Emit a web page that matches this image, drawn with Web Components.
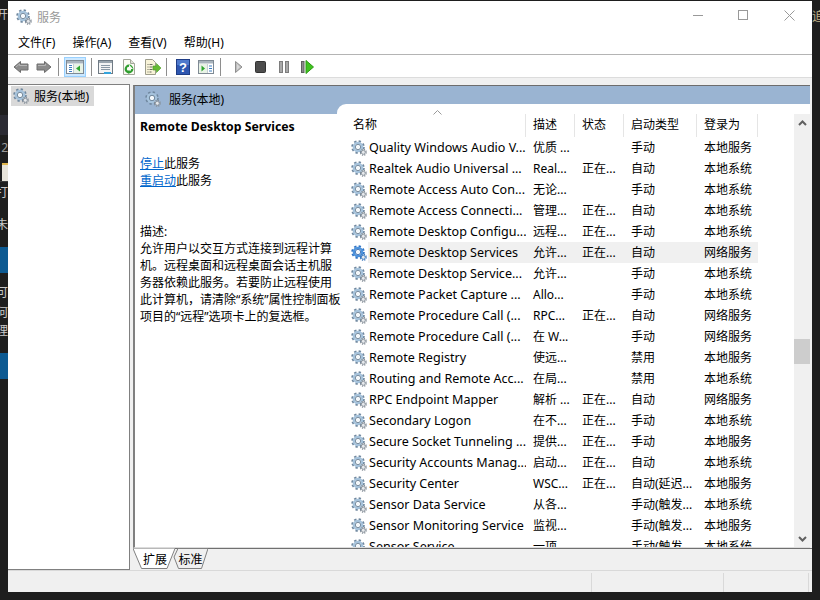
<!DOCTYPE html>
<html lang="zh">
<head>
<meta charset="utf-8">
<title>服务</title>
<style>
  html, body { margin: 0; padding: 0; height: 100%; background: #1e1e1e; overflow: hidden; }
  body { font: 12px "Noto Sans", "Noto Sans CJK SC", sans-serif; color: #000; }
</style>
</head>
<body>
<desktop-shell>
  <mmc-window></mmc-window>
</desktop-shell>

<script>
const FONT = `"Noto Sans", "Noto Sans CJK SC", sans-serif`;
const COLUMNS = "175px 49px 49px 73px 61px";

const SERVICES = [
  ["Quality Windows Audio V...", "优质 ...", "", "手动", "本地服务"],
  ["Realtek Audio Universal ...", "Real...", "正在...", "自动", "本地系统"],
  ["Remote Access Auto Con...", "无论...", "", "手动", "本地系统"],
  ["Remote Access Connecti...", "管理...", "正在...", "自动", "本地系统"],
  ["Remote Desktop Configu...", "远程...", "正在...", "手动", "本地系统"],
  ["Remote Desktop Services", "允许...", "正在...", "自动", "网络服务", true],
  ["Remote Desktop Service...", "允许...", "", "手动", "本地系统"],
  ["Remote Packet Capture ...", "Allo...", "", "手动", "本地系统"],
  ["Remote Procedure Call (...", "RPC...", "正在...", "自动", "网络服务"],
  ["Remote Procedure Call (...", "在 W...", "", "手动", "网络服务"],
  ["Remote Registry", "使远...", "", "禁用", "本地服务"],
  ["Routing and Remote Acc...", "在局...", "", "禁用", "本地系统"],
  ["RPC Endpoint Mapper", "解析 ...", "正在...", "自动", "网络服务"],
  ["Secondary Logon", "在不...", "正在...", "手动", "本地系统"],
  ["Secure Socket Tunneling ...", "提供...", "正在...", "手动", "本地服务"],
  ["Security Accounts Manag...", "启动...", "正在...", "自动", "本地系统"],
  ["Security Center", "WSC...", "正在...", "自动(延迟...", "本地服务"],
  ["Sensor Data Service", "从各...", "", "手动(触发...", "本地系统"],
  ["Sensor Monitoring Service", "监视...", "", "手动(触发...", "本地服务"],
  ["Sensor Service", "一项...", "", "手动(触发...", "本地系统"],
];

// toolbar pictures, 16x16
const ICONS = {
  back: `<path d="M1 8 7.500 2.500V5H15v6H7.500v2.500z" fill="#8c8c8c" stroke="#6e6e6e"/><path d="M3 8 6.500 5v1.500H14" fill="none" stroke="#b5b5b5"/>`,
  forward: `<path d="M15 8 8.500 2.500V5H1v6h7.500v2.500z" fill="#8c8c8c" stroke="#6e6e6e"/><path d="M2 6.500H9.500V5" fill="none" stroke="#b5b5b5"/>`,
  tree: `<rect x=".5" y="1.500" width="17" height="13" fill="#fff" stroke="#7f8a94"/><rect x="1" y="2" width="16" height="2.500" fill="#a9b4bd"/><path d="M3 6.500h3M3 8.500h3M3 10.500h3M3 12.500h3" stroke="#3f7fc0"/><path d="M7.500 5v9" stroke="#c5cdd3"/><rect x="8" y="5" width="9" height="9" fill="#e9f3e6"/><path d="M14 6.500v6L10 9.500z" fill="#2fa52f"/>`,
  props: `<rect x=".5" y="1.500" width="14" height="13" fill="#f4f4f4" stroke="#6f7a84"/><rect x="1" y="2" width="13" height="2" fill="#9aa5ae"/><path d="M3 6.500h9M3 8.500h9M3 10.500h9" stroke="#8a98a5"/><rect x="6" y="13" width="7" height="2" fill="#35a4dc"/>`,
  refresh: `<path d="M2.500 .5h7l4 4v11h-11z" fill="#fbfbf4" stroke="#a3a79a"/><path d="M9.500 .5v4h4" fill="#e0e0d6" stroke="#a3a79a"/><circle cx="8" cy="10" r="3.300" fill="none" stroke="#2f9e2f" stroke-width="2.200"/><path d="M8 5.500 12 10H8z" fill="#fbfbf4"/><path d="M7.500 14.800 4 11.500h5z" fill="#2f9e2f"/>`,
  exportList: `<path d="M1.500 .5h7l3 3v12h-10z" fill="#f8f3d8" stroke="#9d9d8c"/><path d="M3.500 5.500h5M3.500 8h5M3.500 10.500h5M3.500 13h4" stroke="#6a6a60" stroke-dasharray="1 1 3 1"/><path d="M9 7h3.500V4.500L17 9l-4.500 4.500V11H9z" fill="#66bb33" stroke="#4c9a25" stroke-width=".6"/>`,
  help: `<rect x=".5" y=".5" width="13" height="15" fill="#2e56b0" stroke="#1f3d86"/><rect x="1" y="1" width="12" height="5" fill="#4f79cc"/><text x="7" y="13" font-size="13" font-weight="700" text-anchor="middle" fill="#fff" font-family="Liberation Sans, sans-serif">?</text>`,
  split: `<rect x=".5" y="1.500" width="15" height="13" fill="#fff" stroke="#7f8a94"/><rect x="1" y="2" width="14" height="2.500" fill="#a9b4bd"/><rect x="1" y="5" width="8" height="9" fill="#e9f3e6"/><path d="M3.500 6.500v6l3.500-3z" fill="#2fa52f"/><path d="M9.500 5v9" stroke="#c5cdd3"/><path d="M11 7h3M11 9.500h3M11 12h3" stroke="#3f7fc0"/>`,
  play: `<path d="M3.500 2.500v11l6.500-5.500z" fill="#bdbdbd" stroke="#8f8f8f"/><path d="M5 5v6l3-3z" fill="#d8d8d8"/>`,
  stop: `<rect x="2.500" y="2.500" width="10" height="11" rx="1" fill="#4d4d4d" stroke="#333"/>`,
  pause: `<rect x="2.500" y="2.500" width="3" height="11" fill="#a9a9a9" stroke="#7d7d7d"/><rect x="8.500" y="2.500" width="3" height="11" fill="#a9a9a9" stroke="#7d7d7d"/>`,
  resume: `<rect x="1.500" y="2.500" width="2.500" height="11" fill="#8b8b8b" stroke="#5f5f5f"/><path d="M6 1.500v13l7.500-6.500z" fill="#3fc41f" stroke="#2d9a14"/>`,
};

function gearSvg(size, selected) {
  const big = selected ? "#2f73c4" : "#6f879e";
  const face = selected ? "#4d93dc" : "#a6c3dc";
  const hub = selected ? "#1e5ba8" : "#587188";
  const small = selected ? "#3a78bd" : "#868f98";
  return `<svg width="${size}" height="${size}" viewBox="0 0 16 16" aria-hidden="true">
    <circle cx="7" cy="7" r="5.800" fill="none" stroke="${big}" stroke-width="2" stroke-dasharray="2.300 2.250"/>
    <circle cx="7" cy="7" r="4.200" fill="none" stroke="${face}" stroke-width="2.200"/>
    <circle cx="7" cy="7" r="2.700" fill="#f4f8fb" stroke="${hub}" stroke-width=".8"/>
    <circle cx="12.300" cy="12.300" r="2.900" fill="none" stroke="${small}" stroke-width="1.300" stroke-dasharray="1.200 1.100"/>
    <circle cx="12.300" cy="12.300" r="2" fill="#e6e9ec" stroke="${small}" stroke-width=".9"/>
  </svg>`;
}

class GearIcon extends HTMLElement {
  connectedCallback() {
    const shadow = this.attachShadow({ mode: "open" });
    const size = this.getAttribute("size") || 16;
    shadow.innerHTML = `<style>:host { display: block; width: ${size}px; height: ${size}px; flex: none; } svg { display: block; }</style>
      ${gearSvg(size, this.hasAttribute("selected"))}`;
  }
}
customElements.define("gear-icon", GearIcon);

// the desktop behind the window, only its edges can be seen
class DesktopShell extends HTMLElement {
  connectedCallback() {
    this.attachShadow({ mode: "open" }).innerHTML = `
      <style>
        :host { display: flex; width: 820px; height: 600px; background: #1e1e1e; color: #c9c9c9; font: 12px ${FONT}; overflow: hidden; }
        .edge { flex: none; width: 8px; display: flex; flex-direction: column; overflow: hidden; }
        .edge.right { padding-top: 7px; }
        .bit { flex: none; height: 20px; line-height: 20px; white-space: nowrap; display: flex; justify-content: flex-end; }
        .right .bit { justify-content: flex-start; color: #c2b48a; }
        .band { flex: none; height: 26px; background: #0d5a92; margin-top: 12px; }
        .dim { flex: none; height: 20px; background: #2b2b33; margin-top: 90px; }
        .doc { flex: none; height: 16px; margin: 5px 0 0 2px; background: #e8e4da; border-top: 2px solid #e0b64d; }
        .mid { flex: 1; padding-top: 1px; padding-bottom: 8px; min-width: 0; display: flex; }
        .line { flex: none; height: 1px; background: #3a3a3a; }
      </style>
      <div class="edge">
        <div class="bit" style="margin-top:5px">开</div>
        <div class="dim"></div>
        <div class="bit" style="margin-top:3px;color:#999">2</div>
        <div class="doc"></div>
        <div class="line"></div>
        <div class="bit" style="margin-top:1px">打</div>
        <div class="bit" style="margin-top:12px">未</div>
        <div class="band"></div>
        <div class="bit" style="margin-top:10px">可</div>
        <div class="bit">何</div>
        <div class="bit" style="margin-top:-2px">理</div>
        <div class="band"></div>
      </div>
      <div class="mid"><slot></slot></div>
      <div class="edge right"><div class="bit">追</div></div>`;
  }
}
customElements.define("desktop-shell", DesktopShell);

class TitleBar extends HTMLElement {
  connectedCallback() {
    this.attachShadow({ mode: "open" }).innerHTML = `
      <style>
        :host { display: flex; align-items: center; height: 32px; padding-left: 8px; background: #fff; }
        span { margin-left: 5px; color: #999; font-size: 12px; flex: 1; }
        .caption { flex: none; align-self: flex-start; width: 45px; height: 29px; display: flex; align-items: center; justify-content: center; }
        .caption svg { margin-left: 1px; }
        .caption:last-child { width: 47px; }
      </style>
      <gear-icon></gear-icon>
      <span>服务</span>
      <div class="caption"><svg width="11" height="11"><path d="M0 5.500h10" stroke="#999"/></svg></div>
      <div class="caption"><svg width="11" height="11"><rect x=".5" y=".5" width="9" height="9" fill="none" stroke="#999"/></svg></div>
      <div class="caption"><svg width="11" height="11"><path d="M.5.5l10 10M10.500.5l-10 10" stroke="#999"/></svg></div>`;
  }
}
customElements.define("title-bar", TitleBar);

class MenuBar extends HTMLElement {
  connectedCallback() {
    const items = ["文件(F)", "操作(A)", "查看(V)", "帮助(H)"];
    this.attachShadow({ mode: "open" }).innerHTML = `
      <style>
        :host { display: flex; gap: 17px; align-items: center; height: 18px; padding: 0 0 3px 10px; background: #fff; border-bottom: 1px solid #b4b4b4; font-size: 12px; }
      </style>
      ${items.map(t => `<span>${t}</span>`).join("")}`;
  }
}
customElements.define("menu-bar", MenuBar);

class ToolBar extends HTMLElement {
  connectedCallback() {
    const btn = (name, gap, w = 16, active = false) =>
      `<div class="btn${active ? " on" : ""}" style="margin-left:${gap}px"><svg width="${w}" height="16" viewBox="0 0 ${w} 16">${ICONS[name]}</svg></div>`;
    const sep = gap => `<i style="margin-left:${gap}px"></i>`;
    this.attachShadow({ mode: "open" }).innerHTML = `
      <style>
        :host { display: flex; align-items: center; height: 21px; padding: 1px 0 0 5px; background: #fff; border-bottom: 1px solid #dcdcdc; }
        .btn { display: flex; flex: none; }
        .btn svg { display: block; }
        .btn.on { width: 20px; height: 18px; align-items: center; justify-content: center; background: #cce8ff; border: 1px solid #99d1ff; }
        i { flex: none; width: 1px; height: 18px; background: #8e8e8e; }
      </style>
      ${btn("back", 0)}${btn("forward", 7)}${sep(6)}
      ${btn("tree", 5, 18, true)}${sep(5)}
      ${btn("props", 6, 15)}${btn("refresh", 8, 15)}${btn("exportList", 8, 17)}${sep(5)}
      ${btn("help", 9, 14)}${btn("split", 8)}${sep(6)}
      ${btn("play", 11)}${btn("stop", 5)}${btn("pause", 8)}${btn("resume", 7)}`;
  }
}
customElements.define("tool-bar", ToolBar);

class TreePane extends HTMLElement {
  connectedCallback() {
    this.attachShadow({ mode: "open" }).innerHTML = `
      <style>
        :host { display: block; flex: none; width: 122px; background: #fff; border-top: 1px solid #808080; border-right: 1px solid #808080; border-bottom: 1px solid #808080; padding: 1px 0 0 3px; box-sizing: border-box; }
        .node { display: flex; align-items: center; gap: 5px; width: 83px; height: 20px; padding-left: 2px; box-sizing: border-box; background: #d9d9d9; }
      </style>
      <div class="node"><gear-icon></gear-icon><span>服务(本地)</span></div>`;
  }
}
customElements.define("tree-pane", TreePane);

class ServiceInfo extends HTMLElement {
  connectedCallback() {
    this.attachShadow({ mode: "open" }).innerHTML = `
      <style>
        :host { display: block; position: relative; z-index: 1; flex: none; width: 202px; margin-top: 10px; padding: 4px 0 0 5px; box-sizing: border-box; background: #fff; line-height: 17px; font-size: 12px; }
        h2 { margin: 0 0 20px; font-size: 12.250px; font-weight: 700; line-height: 17px; white-space: nowrap; }
        a { color: #0066cc; }
        p { margin: 0; }
        .desc { margin-top: 34px; white-space: nowrap; }
      </style>
      <h2><slot name="title"></slot></h2>
      <p><a href="#">停止</a>此服务<br><a href="#">重启动</a>此服务</p>
      <p class="desc">描述:<br><slot></slot></p>`;
  }
}
customElements.define("service-info", ServiceInfo);

class ServiceRow extends HTMLElement {
  set data(row) {
    const [name, desc, state, start, logon, selected] = row;
    this.attachShadow({ mode: "open" }).innerHTML = `
      <style>
        :host { display: grid; grid-template-columns: ${COLUMNS}; height: 21px; line-height: 21px; font-size: 12px; white-space: nowrap; }
        .cell { padding-left: 7px; overflow: hidden; }
        .name { display: flex; align-items: center; padding-left: 0; gap: 1px; }
        .name span { flex: 1; padding-left: 1px; line-height: 21px; font-size: 12.550px; overflow: hidden; }
        :host([selected]) .cell:not(.name), :host([selected]) .name span { background: #f0f0f0; }
      </style>
      <div class="cell name"><gear-icon ${selected ? "selected" : ""}></gear-icon><span>${name}</span></div>
      <div class="cell">${desc}</div>
      <div class="cell">${state}</div>
      <div class="cell">${start}</div>
      <div class="cell">${logon}</div>`;
    if (selected) this.setAttribute("selected", "");
  }
}
customElements.define("service-row", ServiceRow);

class ServiceList extends HTMLElement {
  connectedCallback() {
    const shadow = this.attachShadow({ mode: "open" });
    shadow.innerHTML = `
      <style>
        :host { display: flex; flex: 1; min-width: 0; background: #fff; border-top-left-radius: 9px; overflow: hidden; }
        .table { flex: 1; min-width: 0; padding: 10px 0 0 14px; overflow: hidden; }
        .head { display: grid; grid-template-columns: ${COLUMNS}; height: 23px; font-size: 12px; position: relative; }
        .head div { padding-left: 7px; line-height: 22px; border-right: 1px solid #e5e5e5; }
        .head div:first-child { padding-left: 2px; }
        .sort { position: absolute; left: 82px; top: -4px; }
        .track { flex: none; width: 16px; margin-top: 10px; background: #f0f0f0; display: flex; flex-direction: column; }
        .arrow { flex: none; height: 17px; display: flex; align-items: center; justify-content: center; }
        .space { flex: 1; }
        .thumb { flex: none; height: 25px; margin-top: 208px; background: #cdcdcd; }
      </style>
      <div class="table">
        <div class="head">
          <div>名称</div><div>描述</div><div>状态</div><div>启动类型</div><div>登录为</div>
          <svg class="sort" width="9" height="5"><path d="M.5 4.500l4-4 4 4" fill="none" stroke="#9a9a9a"/></svg>
        </div>
        <div id="rows"></div>
      </div>
      <div class="track">
        <div class="arrow"><svg width="9" height="6"><path d="M1 5l3.500-3.500L8 5" fill="none" stroke="#606060" stroke-width="2"/></svg></div>
        <div class="thumb"></div>
        <div class="space"></div>
        <div class="arrow"><svg width="9" height="6"><path d="M1 1l3.500 3.500L8 1" fill="none" stroke="#606060" stroke-width="2"/></svg></div>
      </div>`;
    const rows = shadow.getElementById("rows");
    for (const s of SERVICES) {
      const r = document.createElement("service-row");
      rows.appendChild(r);
      r.data = s;
    }
  }
}
customElements.define("service-list", ServiceList);

class ViewTab extends HTMLElement {
  connectedCallback() {
    const on = this.hasAttribute("active");
    this.attachShadow({ mode: "open" }).innerHTML = `
      <style>
        :host { display: flex; position: relative; flex: none; height: 21px; width: ${on ? 42 : 36}px; justify-content: center; align-items: center; font-size: 12px; margin-left: ${on ? 0 : -3}px; z-index: ${on ? 1 : 0}; }
        svg { position: absolute; left: 0; top: 0; }
        span { position: relative; padding-left: ${on ? 2 : 1}px; }
      </style>
      ${on
        ? `<svg width="42" height="21"><path d="M0 .5 8.500 20.500H34L42 .5" fill="#fff" stroke="#808080"/></svg>`
        : `<svg width="36" height="21"><path d="M6 .5H36L29.500 20.500H6.500L2 9z" fill="#f0f0f0" stroke="#808080"/></svg>`}
      <span><slot></slot></span>`;
  }
}
customElements.define("view-tab", ViewTab);

class ServicePane extends HTMLElement {
  connectedCallback() {
    this.attachShadow({ mode: "open" }).innerHTML = `
      <style>
        :host { display: flex; flex-direction: column; flex: 1; min-width: 0; margin-top: 1px; margin-left: -1px; }
        .frame { flex: 1; min-height: 0; display: flex; flex-direction: column; background: linear-gradient(#9ab4d2 28px, #fff 28px); border-left: 2px solid #808080; border-top: 1px solid #6d6d6d; border-bottom: 1px solid #dcdcdc; margin-right: 2px; }
        .band { flex: none; display: flex; align-items: center; gap: 7px; height: 18px; padding-left: 10px; }
        .band gear-icon { margin-top: 8px; }
        .band span { margin-top: 8px; margin-left: 1px; }
        .body { flex: 1; min-height: 0; display: flex; }
        .tabs { flex: none; height: 21px; display: flex; border-top: 1px solid #707070; background: #f0f0f0; }
        .tabs view-tab { margin-top: -1px; }
      </style>
      <div class="frame">
        <div class="band"><gear-icon></gear-icon><span>服务(本地)</span></div>
        <div class="body">
          <service-info>
            <span slot="title">Remote Desktop Services</span>
            允许用户以交互方式连接到远程计算<br>机。远程桌面和远程桌面会话主机服<br>务器依赖此服务。若要防止远程使用<br>此计算机，请清除“系统”属性控制面板<br>项目的“远程”选项卡上的复选框。
          </service-info>
          <service-list></service-list>
        </div>
      </div>
      <div class="tabs"><view-tab active>扩展</view-tab><view-tab>标准</view-tab></div>`;
  }
}
customElements.define("service-pane", ServicePane);

class StatusBar extends HTMLElement {
  connectedCallback() {
    this.attachShadow({ mode: "open" }).innerHTML = `
      <style>
        :host { display: grid; grid-template-columns: 584px 132px 85px 3px; height: 21px; background: #f0f0f0; border-top: 1px solid #d9d9d9; }
        div { border-right: 1px solid #d9d9d9; margin-top: 2px; }
        div:last-child { border: 0; }
      </style>
      <div></div><div></div><div></div><div></div>`;
  }
}
customElements.define("status-bar", StatusBar);

class MmcWindow extends HTMLElement {
  connectedCallback() {
    this.attachShadow({ mode: "open" }).innerHTML = `
      <style>
        :host { display: flex; flex-direction: column; flex: 1; min-width: 0; background: #f0f0f0; font: 12px ${FONT}; color: #000; }
        .work { flex: 1; min-height: 0; display: flex; gap: 4px; padding-top: 6px; }
      </style>
      <title-bar></title-bar>
      <menu-bar></menu-bar>
      <tool-bar></tool-bar>
      <div class="work">
        <tree-pane></tree-pane>
        <service-pane></service-pane>
      </div>
      <status-bar></status-bar>`;
  }
}
customElements.define("mmc-window", MmcWindow);
</script>
</body>
</html>
